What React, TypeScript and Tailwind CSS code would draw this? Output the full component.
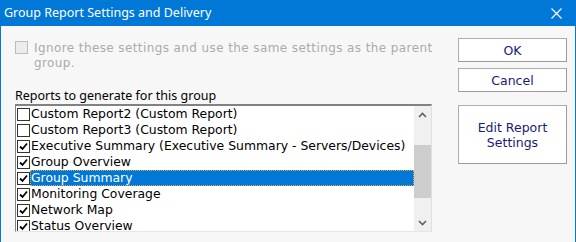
import React from "react";

const reports = [
  { label: "Custom Report2 (Custom Report)", checked: false },
  { label: "Custom Report3 (Custom Report)", checked: false },
  { label: "Executive Summary (Executive Summary - Servers/Devices)", checked: true },
  { label: "Group Overview", checked: true },
  { label: "Group Summary", checked: true, selected: true },
  { label: "Monitoring Coverage", checked: true },
  { label: "Network Map", checked: true },
  { label: "Status Overview", checked: true },
];

function Check({ checked, disabled }: { checked: boolean; disabled?: boolean }) {
  return (
    <span
      className={
        "flex h-[13px] w-[13px] shrink-0 items-center justify-center border " +
        (disabled ? "border-[#bcbcbc] bg-[#ececec]" : "border-[#333] bg-white")
      }
    >
      {checked ? (
        <svg width="9" height="9" viewBox="0 0 9 9">
          <path d="M1 4.5 L3.5 7 L8 1.5" fill="none" stroke="#000" strokeWidth="1.8" />
        </svg>
      ) : null}
    </span>
  );
}

function DlgButton({ children, className = "" }: { children: React.ReactNode; className?: string }) {
  return (
    <button
      className={
        "flex w-[109px] items-center justify-center border border-[#adadad] border-b-[#9a9a9a] border-r-[#9a9a9a] bg-white text-[12.5px] leading-[15px] text-[#1a1a78] " +
        className
      }
    >
      {children}
    </button>
  );
}

export default function App() {
  return (
    <div className="flex h-[242px] w-[576px] flex-col border-x border-[#0078d7] bg-[#f7f7f7] font-['DejaVu_Sans',sans-serif]">
      <div className="-mx-px flex h-[26px] shrink-0 items-center justify-between bg-[#0078d7] pl-[4px] pr-[14px]">
        <span className="font-['Noto_Sans',sans-serif] text-[12.5px] text-white">Group Report Settings and Delivery</span>
        <svg width="11" height="11" viewBox="0 0 11 11">
          <path d="M0.5 0.5 L10.5 10.5 M10.5 0.5 L0.5 10.5" stroke="#fff" strokeWidth="1.2" />
        </svg>
      </div>

      <div className="flex flex-1 pl-[14px] pr-[8px]">
        <div className="flex w-[417px] flex-col">
          <div className="mt-[14px] flex w-[440px] gap-[6px]">
            <span className="mt-[1px]">
              <Check checked={false} disabled />
            </span>
            <p className="mt-[1px] text-[12px] leading-[15px] tracking-[0.4px] text-[#ababab]">
              Ignore these settings and use the same settings as the parent group.
            </p>
          </div>

          <p className="mt-[16px] font-['Noto_Sans',sans-serif] text-[12.5px] leading-[17px] text-black">
            Reports to generate for this group
          </p>

          <div className="flex h-[128px] overflow-hidden border-b border-l border-r border-t-2 border-[#828282] border-b-[#e6e6e6] border-r-[#e0e0e0] bg-white">
            <div className="flex flex-1 flex-col pl-[1px]">
              {reports.map((r) => (
                <div key={r.label} className="flex h-[16px] shrink-0 items-center">
                  <Check checked={r.checked} />
                  <span
                    className={
                      "flex h-[16px] flex-1 items-center whitespace-nowrap pl-[1px] text-[12.4px] leading-[16px] " +
                      (r.selected
                        ? "bg-[#0078d7] text-white outline outline-1 -outline-offset-1 outline-dotted outline-[#e8a34a]"
                        : "text-black")
                    }
                  >
                    {r.label}
                  </span>
                </div>
              ))}
            </div>
            <div className="flex w-[17px] shrink-0 flex-col bg-[#f0f0f0]">
              <div className="flex h-[17px] items-center justify-center">
                <svg width="9" height="6" viewBox="0 0 9 6">
                  <path d="M1 5 L4.5 1.5 L8 5" fill="none" stroke="#606060" strokeWidth="1.6" />
                </svg>
              </div>
              <div className="mt-[22px] h-[53px] bg-[#cdcdcd]" />
              <div className="flex-1" />
              <div className="flex h-[17px] items-center justify-center">
                <svg width="9" height="6" viewBox="0 0 9 6">
                  <path d="M1 1 L4.5 4.5 L8 1" fill="none" stroke="#606060" strokeWidth="1.6" />
                </svg>
              </div>
            </div>
          </div>
        </div>

        <div className="ml-auto mt-[12px] flex flex-col">
          <DlgButton className="h-[24px]">OK</DlgButton>
          <DlgButton className="mt-[6px] h-[24px]">Cancel</DlgButton>
          <DlgButton className="mt-[13px] h-[59px] text-center">
            Edit Report
            <br />
            Settings
          </DlgButton>
        </div>
      </div>
    </div>
  );
}
